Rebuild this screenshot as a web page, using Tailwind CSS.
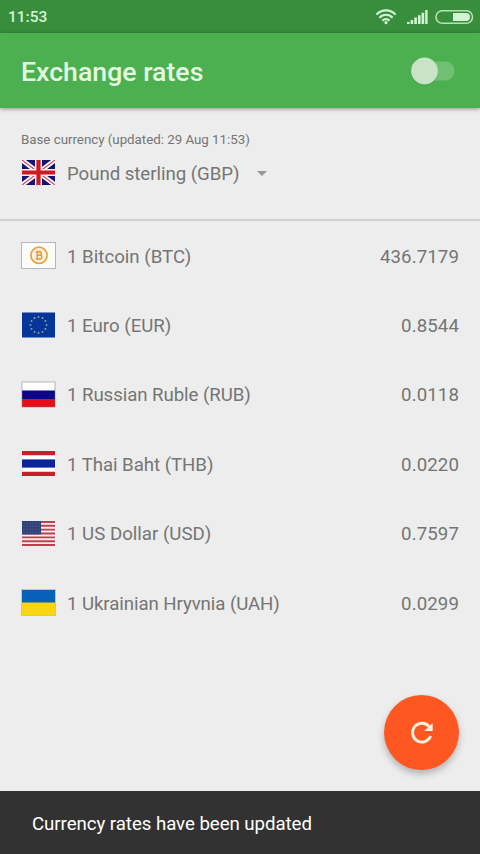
<!DOCTYPE html>
<html lang="en">
  <head>
    <meta charset="UTF-8" />
    <meta name="viewport" content="width=device-width, initial-scale=1" />
    <title>Exchange rates</title>
    <script src="https://cdn.jsdelivr.net/npm/@tailwindcss/browser@4"></script>
  </head>
  <body class="bg-[#ededed] font-['Roboto',sans-serif]">
    <div class="relative flex flex-col w-[480px] h-[854px] overflow-hidden text-[#757575]">
      <!-- Status bar -->
      <div class="flex items-center justify-between h-[33px] shrink-0 bg-[#388e3c] pl-2 pr-[6px] text-[#d3f5d2]">
        <span class="text-[15.5px] font-medium pt-0.5">11:53</span>
        <svg class="w-[100px] h-[33px]" viewBox="0 0 100 33" fill="none">
          <g stroke="#d3f5d2" stroke-width="2.1">
            <path d="M2.4 14.6a13 13 0 0 1 19.2 0" />
            <path d="M5.4 17.7a9 9 0 0 1 13.2 0" />
            <path d="M8.4 20.7a5 5 0 0 1 7.2 0" />
          </g>
          <circle cx="12" cy="22.6" r="1.6" fill="#d3f5d2" />
          <path fill="#d3f5d2" d="M33 22h2.6v2H33zM36.6 20h2.6v4h-2.6zM40.3 17.6h2.6V24h-2.6zM44 15.3h2.6V24H44zM47.6 12.8h2.6V24h-2.6zM51.2 10h2.4v14h-2.4z" />
          <rect x="62" y="10.7" width="36.5" height="12.6" rx="6.3" stroke="#b4e2b3" stroke-width="1.6" />
          <path fill="#d3f5d2" d="M79 13h13a4 4 0 0 1 0 8H79z" />
        </svg>
      </div>

      <!-- App bar -->
      <header class="flex items-center justify-between h-[75px] shrink-0 bg-[#4caf50] px-[21px] shadow-[0_1px_4px_rgba(0,0,0,0.4)]">
        <h1 class="text-[26.67px] leading-8 font-medium text-[#e3fae1] pt-0.5">Exchange rates</h1>
        <svg class="w-12 h-8" viewBox="0 0 48 32">
          <rect x="15" y="6.5" width="28.5" height="19" rx="9.5" fill="#70c074" />
          <circle cx="13.5" cy="16.7" r="13.6" fill="#000" opacity=".15" />
          <circle cx="13.5" cy="16" r="13.4" fill="#c8e3c8" />
        </svg>
      </header>

      <!-- Base currency -->
      <section class="h-[113px] shrink-0 border-b-2 border-[#d0d0d0] px-[21px] pt-[22px]">
        <p class="text-[13.33px] leading-5 tracking-[-0.02px]">Base currency (updated: 29 Aug 11:53)</p>
        <div class="flex items-center mt-[9px] h-7">
          <svg class="w-[35px] h-[27px] mr-[11px]" viewBox="0 0 35 27">
            <rect x="1" y="0" width="33" height="25" fill="#15156f" />
            <path d="M1 0l33 25M34 0L1 25" stroke="#fff" stroke-width="4.6" />
            <path d="M1 0l33 25M34 0L1 25" stroke="#d8485c" stroke-width="1.2" />
            <path d="M17.5 0v25M1 12.5h33" stroke="#fbeaea" stroke-width="7" />
            <path d="M17.5 0v25M1 12.5h33" stroke="#cc1a22" stroke-width="4.2" />
            <path d="M0 0h1v27H0zM34 0h1v27h-1zM0 25h35v2H0z" fill="#ededed" />
          </svg>
          <span class="text-[18.67px] tracking-[-0.05px] pt-0.5">Pound sterling (GBP)</span>
          <svg class="w-[10px] h-[5px] ml-[18px]" viewBox="0 0 10 5"><path d="M0 0h10L5 5z" fill="#989898" /></svg>
        </div>
      </section>

      <!-- Rates -->
      <ul class="text-[18.67px]">
        <li class="flex items-center h-[69.4px] px-[21px]">
          <svg class="w-[35px] h-[27px] mr-[11px]" viewBox="0 0 35 27">
            <rect x=".5" y=".5" width="34" height="26" fill="#fbfbf8" stroke="#adbac4" />
            <circle cx="18" cy="13.3" r="8.1" fill="#fbf3e2" stroke="#e7a247" stroke-width="1.7" />
            <g fill="none" stroke="#e39a3c" stroke-width="1.5">
              <path d="M14.6 9.9h4.1a1.7 1.7 0 0 1 0 3.4h-2.4M14.6 16.8h4.5a1.75 1.75 0 0 0 0-3.5M16.2 9.9v6.9" />
              <path d="M17 8.3v1.6M19 8.3v1.6M17 16.8v1.6M19 16.8v1.6" stroke-width="1" />
            </g>
          </svg>
          <span class="grow pt-0.5">1 Bitcoin (BTC)</span>
          <span class="pt-0.5 tracking-[0.1px]">436.7179</span>
        </li>
        <li class="flex items-center h-[69.4px] px-[21px]">
          <svg class="w-[35px] h-[27px] mr-[11px]" viewBox="0 0 35 27">
            <rect x="1" y="0.5" width="33" height="25" fill="#06349a" />
            <circle cx="17.5" cy="12.9" r="8" fill="none" stroke="#8fae93" stroke-width="1.9" stroke-linecap="round" pathLength="12" stroke-dasharray="0 1" />
          </svg>
          <span class="grow pt-0.5">1 Euro (EUR)</span>
          <span class="pt-0.5 tracking-[0.1px]">0.8544</span>
        </li>
        <li class="flex items-center h-[69.4px] px-[21px]">
          <svg class="w-[35px] h-[27px] mr-[11px]" viewBox="0 0 35 27">
            <rect x="1" y="1" width="33" height="9" fill="#fff" />
            <rect x="1" y="9.5" width="33" height="8.5" fill="#08068e" />
            <rect x="1" y="18" width="33" height="8" fill="#e60f19" />
            <rect x="1" y="1" width="33" height="25" fill="none" stroke="#777" stroke-opacity=".5" />
          </svg>
          <span class="grow pt-0.5 tracking-[-0.07px]">1 Russian Ruble (RUB)</span>
          <span class="pt-0.5 tracking-[0.1px]">0.0118</span>
        </li>
        <li class="flex items-center h-[69.4px] px-[21px]">
          <svg class="w-[35px] h-[27px] mr-[11px]" viewBox="0 0 35 27">
            <rect x="1" y="1" width="33" height="25" fill="#fff" />
            <path d="M1 1h33v4.3H1zM1 21.7h33V26H1z" fill="#c5202c" />
            <rect x="1" y="9.4" width="33" height="8.2" fill="#0b259b" />
          </svg>
          <span class="grow pt-0.5 tracking-[-0.05px]">1 Thai Baht (THB)</span>
          <span class="pt-0.5 tracking-[0.1px]">0.0220</span>
        </li>
        <li class="flex items-center h-[69.4px] px-[21px]">
          <svg class="w-[35px] h-[27px] mr-[11px]" viewBox="0 0 35 27">
            <rect x="1" y="1" width="33" height="25" fill="#f6eded" />
            <path d="M1 1.96h33M1 5.81h33M1 9.65h33M1 13.5h33M1 17.35h33M1 21.19h33M1 25.04h33" stroke="#bd4250" stroke-width="1.92" />
            <rect x="1" y="1" width="19" height="13.4" fill="#304078" />
            <path d="M2.5 3.2h17M2.5 6.2h17M2.5 9.2h17M2.5 12.2h17" stroke="#5f6f95" stroke-width="1" stroke-dasharray="1 2" />
          </svg>
          <span class="grow pt-0.5">1 US Dollar (USD)</span>
          <span class="pt-0.5 tracking-[0.1px]">0.7597</span>
        </li>
        <li class="flex items-center h-[69.4px] px-[21px]">
          <svg class="w-[35px] h-[27px] mr-[11px]" viewBox="0 0 35 27">
            <rect x="1" y="1" width="33" height="13" fill="#0861b8" />
            <rect x="1" y="13.5" width="33" height="12.5" fill="#fcd50b" />
            <rect x=".5" y=".5" width="34" height="26" fill="none" stroke="#a9b4b8" stroke-opacity=".7" />
          </svg>
          <span class="grow pt-0.5 tracking-[-0.08px]">1 Ukrainian Hryvnia (UAH)</span>
          <span class="pt-0.5 tracking-[0.1px]">0.0299</span>
        </li>
      </ul>

      <!-- Refresh button -->
      <button class="absolute right-[21px] bottom-[84px] size-[75px] rounded-full bg-[#ff5722] flex items-center justify-center shadow-[0_4px_7px_rgba(0,0,0,0.25)]">
        <svg class="size-8" viewBox="0 0 32 32" fill="none">
          <path d="M23.3 9.8a9.4 9.4 0 1 0 1.4 9.3" stroke="#fff1de" stroke-width="2.8" />
          <path d="M26.6 6v8.1h-8.3z" fill="#fff1de" />
        </svg>
      </button>

      <!-- Snackbar -->
      <div class="flex items-center h-[63px] shrink-0 mt-auto bg-[#323232] px-8 pt-0.5 text-[18.67px] tracking-[-0.05px] text-white">
        Currency rates have been updated
      </div>
    </div>
  </body>
</html>
